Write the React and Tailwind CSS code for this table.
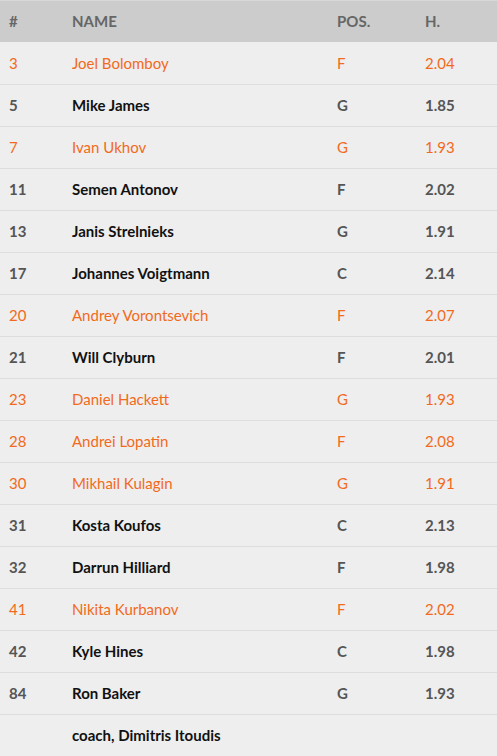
const players = [
  ["3", "Joel Bolomboy", "F", "2.04", true],
  ["5", "Mike James", "G", "1.85", false],
  ["7", "Ivan Ukhov", "G", "1.93", true],
  ["11", "Semen Antonov", "F", "2.02", false],
  ["13", "Janis Strelnieks", "G", "1.91", false],
  ["17", "Johannes Voigtmann", "C", "2.14", false],
  ["20", "Andrey Vorontsevich", "F", "2.07", true],
  ["21", "Will Clyburn", "F", "2.01", false],
  ["23", "Daniel Hackett", "G", "1.93", true],
  ["28", "Andrei Lopatin", "F", "2.08", true],
  ["30", "Mikhail Kulagin", "G", "1.91", true],
  ["31", "Kosta Koufos", "C", "2.13", false],
  ["32", "Darrun Hilliard", "F", "1.98", false],
  ["41", "Nikita Kurbanov", "F", "2.02", true],
  ["42", "Kyle Hines", "C", "1.98", false],
  ["84", "Ron Baker", "G", "1.93", false],
];

export default function App() {
  return (
    <div className="w-[497px] h-[756px] bg-[#eeeeee] text-[15px] overflow-hidden" style={{ fontFamily: "Lato, 'Open Sans', sans-serif" }}>
      <div className="flex items-center h-[42px] bg-[#cccccc] border-t border-[#d8d8d8] font-bold text-[#666666] uppercase">
        <div className="w-[72px] pl-[9px]">#</div>
        <div className="w-[265px]">Name</div>
        <div className="w-[88px]">Pos.</div>
        <div className="flex-1">H.</div>
      </div>
      <div className="flex flex-col">
        {players.map(([n, name, pos, h, orange], i) => (
          <div key={n} className={`flex items-center border-b border-[#dddddd] ${i === 0 ? "h-[43px]" : "h-[42px]"} ${orange ? "text-[#f26a1b] font-normal" : "text-[#555555] font-bold"}`}>
            <div className="w-[72px] pl-[9px]">{n}</div>
            <div className={`w-[265px] ${orange ? "" : "text-[#111111]"}`}>{name}</div>
            <div className="w-[88px]">{pos}</div>
            <div className="flex-1">{h}</div>
          </div>
        ))}
        <div className="flex items-center h-[41px] font-bold text-[#111111]">
          <div className="w-[72px] pl-[9px]"></div>
          <div className="flex-1">coach, Dimitris Itoudis</div>
        </div>
      </div>
    </div>
  );
}
